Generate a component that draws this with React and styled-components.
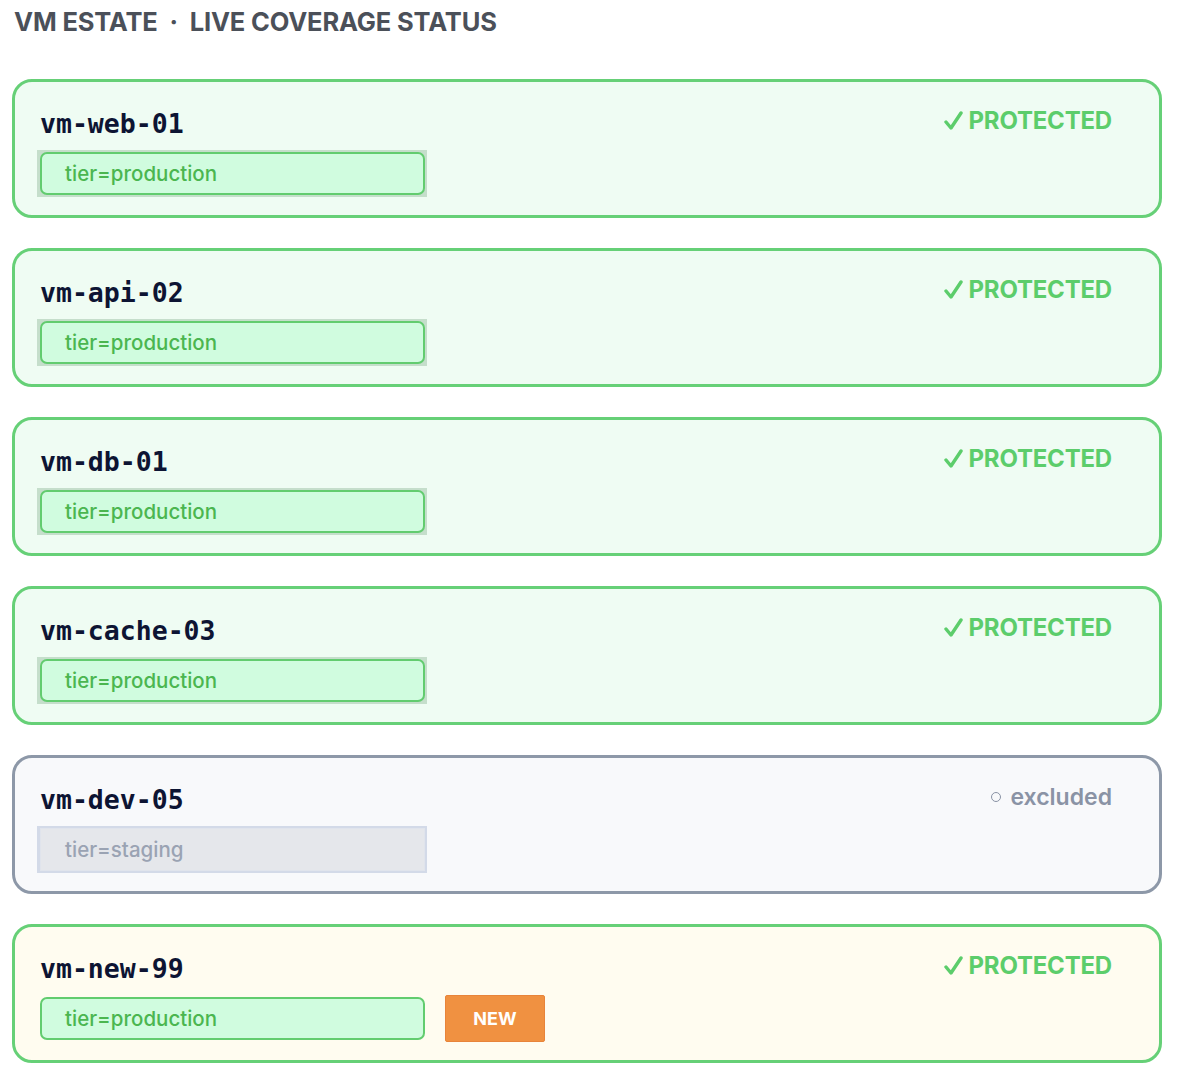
import React from 'react';
import styled, { createGlobalStyle } from 'styled-components';

const GlobalStyle = createGlobalStyle`
  body {
    margin: 0;
    background: #ffffff;
    font-family: Inter, "Noto Sans", sans-serif;
  }
`;

const Page = styled.div`
  padding: 7px 28px 20px 12px;
`;

const Heading = styled.h1`
  margin: 0 0 42px 2px;
  font-size: 25.5px;
  line-height: 30px;
  font-weight: 700;
  color: #4b5059;
  letter-spacing: -0.15px;
`;

const List = styled.div`
  display: flex;
  flex-direction: column;
  gap: 30px;
`;

const palette = {
  protected: { bg: '#effcf3', border: '#66d077' },
  excluded: { bg: '#f8f9fb', border: '#8d98a8' },
  fresh: { bg: '#fffcf0', border: '#66d077' },
};

const Card = styled.div`
  display: flex;
  justify-content: space-between;
  align-items: flex-start;
  height: 139px;
  box-sizing: border-box;
  padding: 26px 47px 18px 25px;
  border: 3px solid ${p => palette[p.variant].border};
  border-radius: 20px;
  background: ${p => palette[p.variant].bg};
`;

const Left = styled.div`
  display: flex;
  flex-direction: column;
  gap: 10px;
`;

const Name = styled.div`
  font-family: "DejaVu Sans Mono", "Liberation Mono", monospace;
  font-weight: 700;
  font-size: 26.5px;
  line-height: 32px;
  color: #0d1433;
`;

const TagRow = styled.div`
  display: flex;
  align-items: center;
  gap: 20px;
`;

const TagFrame = styled.div`
  display: flex;
  margin-left: ${p => (p.plain ? '0' : '-3px')};
  padding: ${p => (p.plain ? '0' : '2px 2px 2px 3px')};
  background: ${p => (p.plain ? 'transparent' : p.muted ? '#d3dae8' : 'rgba(120, 165, 130, 0.35)')};
`;

const Tag = styled.div`
  width: 385px;
  height: 43px;
  box-sizing: border-box;
  display: flex;
  align-items: center;
  padding-left: 23px;
  font-size: 20.5px;
  font-weight: 500;
  ${p => p.muted ? `
    background: #e5e7eb;
    color: #9aa3b3;
    border: 1px solid #e0e4ec;
    padding-left: 24px;
  ` : `
    background: #d0fcdf;
    color: #4bb650;
    border: 2px solid #62cc6f;
    border-radius: 7px;
  `}
`;

const NewBadge = styled.div`
  width: 100px;
  height: 47px;
  box-sizing: border-box;
  display: flex;
  align-items: center;
  justify-content: center;
  background: #f09141;
  border: 1px solid #e8843a;
  border-radius: 2px;
  color: #ffffff;
  font-size: 18px;
  font-weight: 700;
`;

const Status = styled.div`
  display: flex;
  align-items: center;
  gap: 5px;
  margin-top: -2px;
  font-size: ${p => (p.muted ? '23px' : '24px')};
  line-height: 30px;
  font-weight: ${p => (p.muted ? 600 : 700)};
  color: ${p => (p.muted ? '#8a93a5' : '#5ccd6b')};
  letter-spacing: ${p => (p.muted ? '0' : '-0.2px')};
`;

const Ring = styled.span`
  width: 8px;
  height: 8px;
  border: 1.5px solid #8a93a5;
  border-radius: 50%;
  margin-right: 4px;
`;

const Check = () => (
  <svg width="19" height="20" viewBox="0 0 19 20">
    <path d="M2 11 L7 17 L17 2" fill="none" stroke="#5ccd6b" strokeWidth="3.4" strokeLinecap="round" strokeLinejoin="round" />
  </svg>
);

const vms = [
  { name: 'vm-web-01', tag: 'tier=production', variant: 'protected' },
  { name: 'vm-api-02', tag: 'tier=production', variant: 'protected' },
  { name: 'vm-db-01', tag: 'tier=production', variant: 'protected' },
  { name: 'vm-cache-03', tag: 'tier=production', variant: 'protected' },
  { name: 'vm-dev-05', tag: 'tier=staging', variant: 'excluded' },
  { name: 'vm-new-99', tag: 'tier=production', variant: 'fresh', isNew: true },
];

function VmCard({ vm }) {
  const muted = vm.variant === 'excluded';
  return (
    <Card variant={vm.variant}>
      <Left>
        <Name>{vm.name}</Name>
        <TagRow>
          <TagFrame muted={muted} plain={vm.isNew}>
            <Tag muted={muted}>{vm.tag}</Tag>
          </TagFrame>
          {vm.isNew && <NewBadge>NEW</NewBadge>}
        </TagRow>
      </Left>
      {muted ? (
        <Status muted><Ring />excluded</Status>
      ) : (
        <Status><Check />PROTECTED</Status>
      )}
    </Card>
  );
}

export default function App() {
  return (
    <Page>
      <GlobalStyle />
      <Heading>VM ESTATE&nbsp; ·&nbsp; LIVE COVERAGE STATUS</Heading>
      <List>
        {vms.map(vm => <VmCard key={vm.name} vm={vm} />)}
      </List>
    </Page>
  );
}
